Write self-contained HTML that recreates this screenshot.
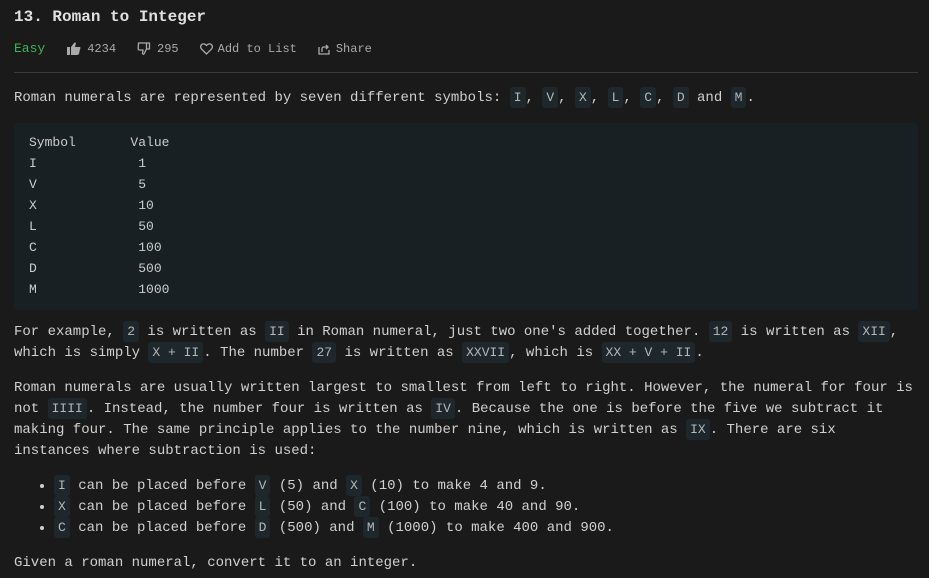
<!DOCTYPE html>
<html><head><meta charset="utf-8"><style>
body{margin:0;background:#1a1a1a;color:#d0d0d0;font-family:"Liberation Mono",monospace;font-size:14px;width:929px;height:578px;overflow:hidden}
.wrap{padding:0 11px 0 14px}
h1{font-size:16px;font-weight:bold;margin:0;position:absolute;top:7px;left:14px;color:#e0e0e0;line-height:20px}
.meta{position:absolute;top:40px;left:14px;font-size:12px;color:#aaa;display:flex;align-items:center;height:17px}
.meta span{display:inline-flex;align-items:center}
hr{position:absolute;top:72px;left:14px;width:904px;margin:0;border:0;border-top:1px solid #3a3a3a}
p{margin:0;line-height:21px}
code{font-family:"Liberation Mono",monospace;font-size:13px;line-height:12px;background:#1e272b;color:#b4b8bb;padding:3px 4px;border-radius:3px}
pre{margin:0;background:#182024;font-family:"Liberation Mono",monospace;font-size:13px;line-height:21px;padding:9px 15px 10px;color:#ccc;border-radius:3px}
ul{margin:0;padding-left:40px;line-height:21px}
</style></head><body>
<h1>13. Roman to Integer</h1>
<div class="meta">
<span style="color:#3cb45a;font-size:13px">Easy</span>
<span style="margin-left:22px"><svg width="14" height="13" viewBox="0 0 14 13"><rect x="0" y="5" width="3" height="8" fill="#aaa"/><path d="M4 5 L7 1 Q8 0 9 1 L8 5 H13 Q14 6 13 7 L12 12 Q11 13 10 13 H4Z" fill="#aaa"/></svg><span style="margin-left:6px">4234</span></span>
<span style="margin-left:21px"><svg width="14" height="13" viewBox="0 0 14 13"><path d="M1.5 1 H9.5 V7 L7 12 Q6 12.5 5.5 11.5 L6 8 H2.5 Q1 8 1.2 6.5Z M9.5 1 H12.5 V7 H9.5" fill="none" stroke="#aaa" stroke-width="1.3" stroke-linejoin="round"/></svg><span style="margin-left:6px">295</span></span>
<span style="margin-left:21px"><svg width="13" height="12" viewBox="0 0 13 12"><path d="M6.5 11 L1.5 6 Q-0.5 3 2 1.3 Q4.5 0 6.5 2.5 Q8.5 0 11 1.3 Q13.5 3 11.5 6Z" fill="none" stroke="#aaa" stroke-width="1.3"/></svg><span style="margin-left:5px">Add to List</span></span>
<span style="margin-left:21px"><svg width="13" height="12" viewBox="0 0 13 12"><path d="M1 4 V11 H11 V7 M4 9 V6 Q4 4 6 4 H10 M8 2 L10 4 L8 6" fill="none" stroke="#aaa" stroke-width="1.3"/></svg><span style="margin-left:5px">Share</span></span>
</div>
<hr>
<div class="wrap" style="position:absolute;top:88px;left:0;width:904px">
<p>Roman numerals are represented by seven different symbols: <code>I</code>, <code>V</code>, <code>X</code>, <code>L</code>, <code>C</code>, <code>D</code> and <code>M</code>.</p>
<pre style="margin-top:14px">Symbol       Value
I             1
V             5
X             10
L             50
C             100
D             500
M             1000</pre>
<p style="margin-top:12px">For example, <code>2</code> is written as <code>II</code> in Roman numeral, just two one's added together. <code>12</code> is written as <code>XII</code>, which is simply <code>X + II</code>. The number <code>27</code> is written as <code>XXVII</code>, which is <code>XX + V + II</code>.</p>
<p style="margin-top:14px">Roman numerals are usually written largest to smallest from left to right. However, the numeral for four is not <code>IIII</code>. Instead, the number four is written as <code>IV</code>. Because the one is before the five we subtract it making four. The same principle applies to the number nine, which is written as <code>IX</code>. There are six instances where subtraction is used:</p>
<ul style="margin-top:14px">
<li><code>I</code> can be placed before <code>V</code> (5) and <code>X</code> (10) to make 4 and 9.</li>
<li><code>X</code> can be placed before <code>L</code> (50) and <code>C</code> (100) to make 40 and 90.</li>
<li><code>C</code> can be placed before <code>D</code> (500) and <code>M</code> (1000) to make 400 and 900.</li>
</ul>
<p style="margin-top:14px">Given a roman numeral, convert it to an integer.</p>
</div>
</body></html>
